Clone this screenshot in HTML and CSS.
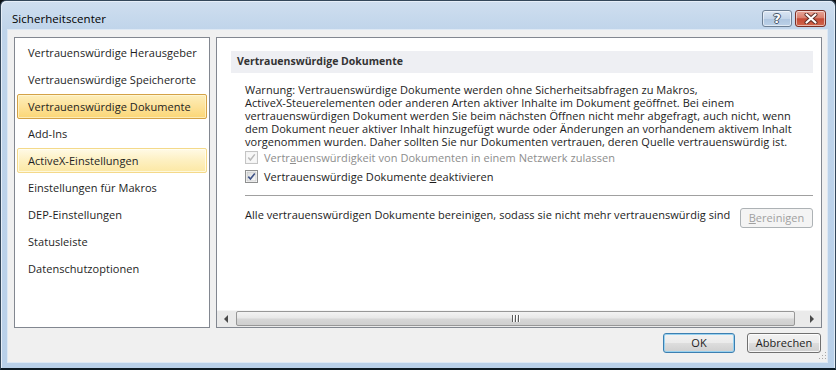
FILE: index.html
```html
<!DOCTYPE html>
<html lang="de">
<head>
<meta charset="utf-8">
<title>Sicherheitscenter</title>
<link rel="stylesheet" href="styles.css">
</head>
<body>
<div class="window">
  <div class="titlebar">
    <span class="title">Sicherheitscenter</span>
    <div class="caption-btns">
      <div class="cap help"><span class="q">?</span></div>
      <div class="cap close">
        <svg width="14" height="11" viewBox="0 0 14 11">
          <path d="M2.5 1.5 L11.5 9.5 M11.5 1.5 L2.5 9.5" stroke="#5a2a22" stroke-width="4" stroke-linecap="round"/>
          <path d="M2.5 1.5 L11.5 9.5 M11.5 1.5 L2.5 9.5" stroke="#ffffff" stroke-width="2.2" stroke-linecap="round"/>
        </svg>
      </div>
    </div>
  </div>
  <div class="client">
    <div class="main">
      <ul class="nav">
        <li class="item">Vertrauenswürdige Herausgeber</li>
        <li class="item">Vertrauenswürdige Speicherorte</li>
        <li class="item selected">Vertrauenswürdige Dokumente</li>
        <li class="item">Add-Ins</li>
        <li class="item hover">ActiveX-Einstellungen</li>
        <li class="item">Einstellungen für Makros</li>
        <li class="item">DEP-Einstellungen</li>
        <li class="item">Statusleiste</li>
        <li class="item">Datenschutzoptionen</li>
      </ul>
      <div class="panel">
        <div class="panel-body">
          <div class="heading">Vertrauenswürdige Dokumente</div>
          <div class="content">
            <p class="warn"><span class="ln">Warnung: Vertrauenswürdige Dokumente werden ohne Sicherheitsabfragen zu Makros,</span><span class="ln">ActiveX-Steuerelementen oder anderen Arten aktiver Inhalte im Dokument geöffnet. Bei einem</span><span class="ln">vertrauenswürdigen Dokument werden Sie beim nächsten Öffnen nicht mehr abgefragt, auch nicht, wenn</span><span class="ln">dem Dokument neuer aktiver Inhalt hinzugefügt wurde oder Änderungen an vorhandenem aktivem Inhalt</span><span class="ln">vorgenommen wurden. Daher sollten Sie nur Dokumenten vertrauen, deren Quelle vertrauenswürdig ist.</span></p>
            <div class="check disabled">
              <svg class="box" width="13" height="13" viewBox="0 0 13 13">
                <rect x="0.5" y="0.5" width="12" height="12" fill="#f4f4f4" stroke="#c4c4c4"/>
                <rect x="2" y="2" width="9" height="9" fill="#f7f7f7"/>
                <path d="M3.3 6.6 L5.4 9 L9.8 3.4" fill="none" stroke="#b9b9b9" stroke-width="1.5"/>
              </svg>
              <span>Vertr<u>a</u>uenswürdigkeit von Dokumenten in einem Netzwerk zulassen</span>
            </div>
            <div class="check">
              <svg class="box" width="13" height="13" viewBox="0 0 13 13">
                <defs><linearGradient id="cg" x1="0" y1="0" x2="1" y2="1"><stop offset="0" stop-color="#d9dadb"/><stop offset="1" stop-color="#fbfbfb"/></linearGradient></defs>
                <rect x="0.5" y="0.5" width="12" height="12" fill="#ffffff" stroke="#8e8f8f"/>
                <rect x="2" y="2" width="9" height="9" fill="url(#cg)" stroke="#b7b8b9" stroke-width="0.6"/>
                <path d="M3.3 6.6 L5.4 9 L9.8 3.4" fill="none" stroke="#3f5387" stroke-width="1.6"/>
              </svg>
              <span>Vertrauenswürdige Dokumente <u>d</u>eaktivieren</span>
            </div>
            <div class="sep"></div>
            <div class="clear-row">
              <span class="clear-text">Alle vertrauenswürdigen Dokumente bereinigen, sodass sie nicht mehr vertrauenswürdig sind</span>
              <div class="btn disabled clear-btn"><u>B</u>ereinigen</div>
            </div>
          </div>
        </div>
        <div class="hscroll">
          <div class="arrow left">
            <svg width="5" height="8" viewBox="0 0 5 8"><polygon points="4,0 0,4 4,8" fill="#4a4a4a"/></svg>
          </div>
          <div class="track">
            <div class="thumb">
              <svg width="8" height="7" viewBox="0 0 8 7">
                <rect x="0" y="0" width="1" height="7" fill="#5a5a5a"/><rect x="1" y="0" width="1" height="7" fill="#ffffff"/>
                <rect x="3" y="0" width="1" height="7" fill="#5a5a5a"/><rect x="4" y="0" width="1" height="7" fill="#ffffff"/>
                <rect x="6" y="0" width="1" height="7" fill="#5a5a5a"/><rect x="7" y="0" width="1" height="7" fill="#ffffff"/>
              </svg>
            </div>
          </div>
          <div class="arrow right">
            <svg width="5" height="8" viewBox="0 0 5 8"><polygon points="1,0 5,4 1,8" fill="#4a4a4a"/></svg>
          </div>
        </div>
      </div>
    </div>
    <div class="buttons">
      <div class="btn default">OK</div>
      <div class="btn">Abbrechen</div>
    </div>
    <svg class="grip" width="9" height="9" viewBox="0 0 9 9">
      <rect x="7" y="1" width="1" height="1" fill="#a8a8a8"/>
      <rect x="4" y="4" width="1" height="1" fill="#a8a8a8"/>
      <rect x="7" y="4" width="1" height="1" fill="#a8a8a8"/>
      <rect x="1" y="7" width="1" height="1" fill="#a8a8a8"/>
      <rect x="4" y="7" width="1" height="1" fill="#a8a8a8"/>
      <rect x="7" y="7" width="1" height="1" fill="#a8a8a8"/>
    </svg>
  </div>
</div>
</body>
</html>
```
FILE: styles.css
```css
* { box-sizing: border-box; }
html, body { margin: 0; padding: 0; }
body {
  background: #0b0f14;
  width: 836px;
  height: 370px;
  overflow: hidden;
  font-family: "Open Sans", "Noto Sans", "DejaVu Sans", sans-serif;
  font-size: 11px;
  letter-spacing: 0.05px;
  color: #1c1c1c;
}
.window {
  width: 836px;
  height: 370px;
  border: 1px solid #34475a;
  border-bottom: 2px solid #0d1a24;
  border-radius: 6px 6px 0 0;
  background: linear-gradient(180deg, #cfdeef 0%, #bfd4ea 30px, #b9d0e9 100%);
  display: flex;
  flex-direction: column;
  box-shadow: inset 1px 1px 0 #e6eef8, inset -1px 0 0 #e0ebf6;
}
.titlebar {
  height: 29px;
  flex: none;
  display: flex;
  align-items: flex-start;
  justify-content: space-between;
  padding: 0 9px 0 11px;
}
.title {
  margin-top: 10px;
  font-size: 11.5px;
  line-height: 16px;
  color: #000;
}
.caption-btns {
  display: flex;
  gap: 3px;
  margin-top: 9px;
}
.cap {
  height: 17px;
  border: 1px solid #6d7f94;
  border-radius: 3px;
  display: flex;
  align-items: center;
  justify-content: center;
  box-shadow: inset 0 0 0 1px rgba(255,255,255,0.55);
}
.help {
  width: 30px;
  background: linear-gradient(180deg, #dbe6f3 0%, #c4d5e9 50%, #aec5df 51%, #bcd1e8 100%);
}
.q {
  font-family: "DejaVu Sans", sans-serif;
  font-weight: bold;
  font-size: 13px;
  line-height: 13px;
  color: #ffffff;
  text-shadow: 0 0 1px #3b4a5c, 1px 0 0 #4a5a6d, -1px 0 0 #4a5a6d, 0 1px 0 #4a5a6d, 0 -1px 0 #4a5a6d;
}
.close {
  width: 31px;
  border-color: #7b2f24;
  background: linear-gradient(180deg, #e8a699 0%, #d9806e 45%, #c44a35 52%, #d1664c 100%);
}
.client {
  position: relative;
  flex: 1;
  margin: 0 8px 6px 7px;
  background: #f0f0f0;
  padding: 7px 5px 9px 6px;
  display: flex;
  flex-direction: column;
  box-shadow: 0 0 0 1px #dde8f4;
}
.main {
  height: 291px;
  display: flex;
  gap: 6px;
}
.nav {
  list-style: none;
  margin: 0;
  width: 196px;
  flex: none;
  border: 1px solid #828790;
  background: #ffffff;
  padding: 2px 2px;
  display: flex;
  flex-direction: column;
  gap: 2px;
}
.item {
  height: 25px;
  line-height: 23px;
  padding-left: 10px;
  border: 1px solid transparent;
  border-radius: 2px;
  white-space: nowrap;
  color: #1e1e1e;
}
.item.selected {
  border-color: #d4a247;
  background: linear-gradient(180deg, #fdeebb 0%, #fde29a 50%, #fbd675 100%);
  box-shadow: inset 0 0 0 1px rgba(255,250,225,0.6);
}
.item.hover {
  border-color: #f4d98a;
  background: linear-gradient(180deg, #fffae6 0%, #fdf0c1 50%, #fce8a4 100%);
  box-shadow: inset 0 0 0 1px rgba(255,255,245,0.7);
}
.panel {
  flex: 1;
  border: 1px solid #828790;
  background: #ffffff;
  display: flex;
  flex-direction: column;
}
.panel-body {
  flex: 1;
  padding: 13px 8px 0 14px;
}
.heading {
  height: 22px;
  line-height: 21px;
  padding-left: 6px;
  background: #eeeff3;
  font-weight: bold;
  color: #333333;
  font-size: 10.5px;
  letter-spacing: 0;
}
.content {
  padding-left: 14px;
}
.warn {
  margin: 10px 0 0 0;
  color: #1c1c1c;
}
.ln {
  display: block;
  height: 13px;
  line-height: 13px;
  white-space: nowrap;
}
.check {
  height: 19px;
  display: flex;
  align-items: center;
  gap: 6px;
  white-space: nowrap;
}
.check .box { flex: none; }
.check.disabled span { color: #8d8d8d; }
.sep {
  margin-top: 9px;
  height: 2px;
  border-top: 1px solid #a0a0a0;
  border-bottom: 1px solid #ffffff;
}
.clear-row {
  margin-top: 11px;
  display: flex;
  justify-content: space-between;
  align-items: flex-start;
}
.clear-text {
  line-height: 13px;
  white-space: nowrap;
}
.btn {
  height: 20px;
  border: 1px solid #707070;
  border-radius: 3px;
  display: flex;
  align-items: center;
  justify-content: center;
  background: linear-gradient(180deg, #f2f2f2 0%, #ebebeb 48%, #dddddd 52%, #cfcfcf 100%);
  box-shadow: inset 0 0 0 1px rgba(255,255,255,0.8);
  color: #1c1c1c;
  line-height: 16px;
}
.btn.disabled {
  width: 73px;
  border-color: #adb2b5;
  background: #f4f4f4;
  color: #a0a0a0;
  box-shadow: none;
}
.clear-btn { flex: none; }
.hscroll {
  height: 17px;
  flex: none;
  display: flex;
  background: #eaeaea;
  border-top: 1px solid #f6f6f6;
}
.arrow {
  width: 19px;
  display: flex;
  align-items: center;
  justify-content: center;
}
.track {
  flex: 1;
  display: flex;
  padding: 0 7px 1px 0;
}
.thumb {
  flex: 1;
  border: 1px solid #979797;
  border-radius: 2px;
  background: linear-gradient(180deg, #f3f3f3 0%, #e8e8e8 45%, #d6d6d6 55%, #cfcfcf 100%);
  display: flex;
  align-items: center;
  justify-content: center;
}
.buttons {
  margin-top: 5px;
  height: 20px;
  display: flex;
  justify-content: flex-end;
  gap: 12px;
  padding-right: 1px;
}
.buttons .btn.default {
  width: 72px;
  border-color: #3c7fb1;
  box-shadow: inset 0 0 0 1px #98d1ef;
}
.buttons .btn:not(.default) { width: 74px; }
u { text-decoration: underline; text-underline-offset: 1px; }
.grip {
  position: absolute;
  right: 0;
  bottom: 2px;
}
```
